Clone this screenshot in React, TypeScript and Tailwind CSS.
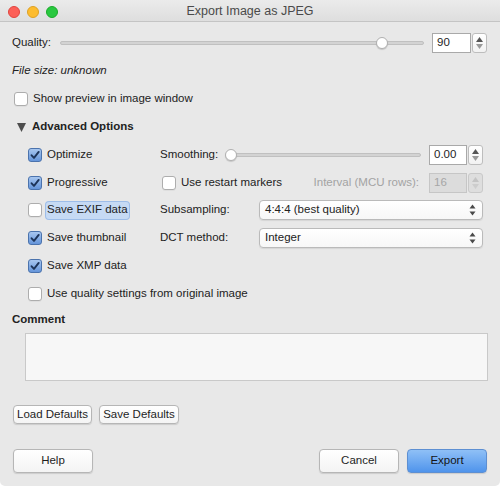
import React from "react";

const FONT = "font-['Liberation_Sans',Arial,sans-serif]";

function CheckBox({ checked }: { checked?: boolean }) {
  if (checked) {
    return (
      <span className="w-[14px] h-[14px] shrink-0 rounded-[3px] border border-[#4b73ad] bg-linear-to-b from-[#a7c6ef] to-[#6595da] flex items-center justify-center">
        <svg width="10" height="10" viewBox="0 0 10 10">
          <path d="M1.6 5.3 L4 7.9 L8.7 1.9" fill="none" stroke="#1d3459" strokeWidth="1.9" strokeLinecap="round" strokeLinejoin="round" />
        </svg>
      </span>
    );
  }
  return <span className="block w-[14px] h-[14px] shrink-0 rounded-[3px] border border-[#adadad] bg-white shadow-[0_1px_0_rgba(0,0,0,0.04)]" />;
}

function Slider({ pos }: { pos: number }) {
  return (
    <div className="relative flex-1 h-[14px] flex items-center">
      <div className="w-full h-[4px] rounded-full bg-[#d3d3d3] border border-[#c0c0c0]" />
      <div
        className="absolute top-[1px] w-[12px] h-[12px] rounded-full bg-white border border-[#b0b0b0] shadow-[0_1px_1px_rgba(0,0,0,0.15)]"
        style={{ left: `calc(${pos * 100}% - 6px)` }}
      />
    </div>
  );
}

function Stepper({ disabled }: { disabled?: boolean }) {
  return (
    <div
      className={`w-[15px] ml-[1px] rounded-[3px] border flex flex-col items-center justify-center gap-[2px] ${
        disabled ? "border-[#c9c9c9] bg-[#dedede]" : "border-[#bdbdbd] bg-linear-to-b from-white to-[#f2f2f2]"
      }`}
    >
      <svg width="7" height="5" viewBox="0 0 7 5">
        <path d="M3.5 0 L7 5 L0 5 Z" fill={disabled ? "#c4c4c4" : "#555"} />
      </svg>
      <svg width="7" height="5" viewBox="0 0 7 5">
        <path d="M0 0 L7 0 L3.5 5 Z" fill={disabled ? "#cdcdcd" : "#999"} />
      </svg>
    </div>
  );
}

function SpinBox({ value, disabled, fieldW }: { value: string; disabled?: boolean; fieldW: string }) {
  return (
    <div className="flex items-stretch h-[20px] shrink-0">
      <div
        className={`${fieldW} border pl-[4px] flex items-center ${
          disabled ? "border-[#c6c6c6] bg-[#dcdcdc] text-[#a6a6a6]" : "border-[#a9a9a9] bg-white text-[#1e1e1e]"
        }`}
      >
        {value}
      </div>
      <Stepper disabled={disabled} />
    </div>
  );
}

function Select({ value }: { value: string }) {
  return (
    <div className="flex-1 h-[20px] rounded-[4px] border border-[#bababa] bg-linear-to-b from-white to-[#f7f7f7] shadow-[0_1px_1px_rgba(0,0,0,0.08)] flex items-center pl-[5px] pr-[6px]">
      <span className="flex-1">{value}</span>
      <svg width="7" height="12" viewBox="0 0 7 12">
        <path d="M3.5 0.5 L6.5 4.5 L0.5 4.5 Z" fill="#4a4a4a" />
        <path d="M0.5 7.5 L6.5 7.5 L3.5 11.5 Z" fill="#4a4a4a" />
      </svg>
    </div>
  );
}

function Button({ children, w, h, primary }: { children: React.ReactNode; w: string; h: string; primary?: boolean }) {
  return (
    <div
      className={`${w} ${h} rounded-[4px] border flex items-center justify-center shadow-[0_1px_1px_rgba(0,0,0,0.12)] ${
        primary
          ? "border-[#5d8fd2] bg-linear-to-b from-[#8fc0f6] to-[#4f94ec] text-[#141414]"
          : "border-[#b6b6b6] bg-linear-to-b from-white to-[#f4f4f4] text-[#1e1e1e]"
      }`}
    >
      {children}
    </div>
  );
}

function CheckRow({ checked, label, focus }: { checked?: boolean; label: string; focus?: boolean }) {
  return (
    <div className="w-[160px] pl-[28px] flex items-center gap-[4px] shrink-0">
      <CheckBox checked={checked} />
      {focus ? (
        <span className="h-[17px] px-[1px] flex items-center rounded-[3px] bg-[#c6daf4] shadow-[0_0_0_1px_#9dbde8]">{label}</span>
      ) : (
        <span className="pl-[1px]">{label}</span>
      )}
    </div>
  );
}

export default function App() {
  return (
    <div className="w-[500px] h-[486px] bg-white">
      <div className={`w-[500px] h-[486px] bg-[#e8e8e8] rounded-b-[5px] overflow-hidden flex flex-col text-[11.5px] text-[#222] ${FONT}`}>
        {/* Title bar */}
        <div className="h-[22px] shrink-0 relative flex items-center justify-center pt-[1px] bg-linear-to-b from-[#ebebeb] to-[#dedede] border-b border-[#c4c4c4]">
          <div className="absolute left-[8px] top-[6px] flex gap-[7px]">
            <span className="w-[12px] h-[12px] rounded-full bg-[#fc5f57] border border-[#e0443e]" />
            <span className="w-[12px] h-[12px] rounded-full bg-[#fdbc2e] border border-[#dea123]" />
            <span className="w-[12px] h-[12px] rounded-full bg-[#29c840] border border-[#1aab29]" />
          </div>
          <span className="text-[12.5px] text-[#4a4a4a]">Export Image as JPEG</span>
        </div>

        {/* Quality */}
        <div className="mt-[7px] h-[28px] flex items-center pl-[12px] pr-[13px]">
          <span>Quality:</span>
          <div className="ml-[9px] flex-1 flex">
            <Slider pos={0.885} />
          </div>
          <div className="ml-[8px]">
            <SpinBox value="90" fieldW="w-[39px]" />
          </div>
        </div>

        {/* File size */}
        <div className="h-[28px] flex items-center pl-[12px] italic">File size: unknown</div>

        {/* Show preview */}
        <div className="h-[27px] flex items-center pl-[14px] gap-[5px]">
          <CheckBox />
          <span>Show preview in image window</span>
        </div>

        {/* Advanced Options */}
        <div className="h-[29px] flex items-center pl-[17px] gap-[6px]">
          <svg width="9" height="10" viewBox="0 0 9 10">
            <path d="M0 1 L9 1 L4.5 10 Z" fill="#4d4d4d" />
          </svg>
          <span className="font-bold">Advanced Options</span>
        </div>

        {/* Optimize / Smoothing */}
        <div className="h-[28px] flex items-center">
          <CheckRow checked label="Optimize" />
          <div className="w-[323px] flex items-center">
            <span>Smoothing:</span>
            <div className="ml-[8px] flex-1 flex">
              <Slider pos={0.025} />
            </div>
            <div className="ml-[8px]">
              <SpinBox value="0.00" fieldW="w-[38px]" />
            </div>
          </div>
        </div>

        {/* Progressive / restart markers */}
        <div className="h-[27px] flex items-center">
          <CheckRow checked label="Progressive" />
          <div className="w-[323px] flex items-center">
            <div className="ml-[2px] flex items-center">
              <CheckBox />
            </div>
            <span className="ml-[5px]">Use restart markers</span>
            <span className="ml-auto text-[#a3a3a3]">Interval (MCU rows):</span>
            <div className="ml-[10px]">
              <SpinBox value="16" fieldW="w-[38px]" disabled />
            </div>
          </div>
        </div>

        {/* EXIF / Subsampling */}
        <div className="h-[28px] flex items-center">
          <CheckRow label="Save EXIF data" focus />
          <div className="w-[323px] flex items-center">
            <span className="w-[99px] shrink-0">Subsampling:</span>
            <Select value="4:4:4 (best quality)" />
          </div>
        </div>

        {/* Thumbnail / DCT */}
        <div className="h-[28px] flex items-center">
          <CheckRow checked label="Save thumbnail" />
          <div className="w-[323px] flex items-center">
            <span className="w-[99px] shrink-0">DCT method:</span>
            <Select value="Integer" />
          </div>
        </div>

        {/* XMP */}
        <div className="h-[28px] flex items-center">
          <CheckRow checked label="Save XMP data" />
        </div>

        {/* Use quality settings */}
        <div className="h-[27px] flex items-center pl-[28px] gap-[4px]">
          <CheckBox />
          <span className="pl-[1px]">Use quality settings from original image</span>
        </div>

        {/* Comment */}
        <div className="h-[26px] flex items-center pl-[12px] font-bold">Comment</div>
        <div className="ml-[25px] mr-[12px] h-[48px] bg-[#f7f7f7] border border-[#c9c9c9]" />

        {/* Defaults */}
        <div className="mt-[24px] flex gap-[7px] pl-[13px]">
          <Button w="w-[79px]" h="h-[19px]">Load Defaults</Button>
          <Button w="w-[80px]" h="h-[19px]">Save Defaults</Button>
        </div>

        {/* Bottom buttons */}
        <div className="mt-[25px] flex items-center pl-[13px] pr-[13px]">
          <Button w="w-[80px]" h="h-[24px]">Help</Button>
          <div className="ml-auto flex gap-[8px]">
            <Button w="w-[80px]" h="h-[24px]">Cancel</Button>
            <Button w="w-[80px]" h="h-[24px]" primary>Export</Button>
          </div>
        </div>
      </div>
    </div>
  );
}
